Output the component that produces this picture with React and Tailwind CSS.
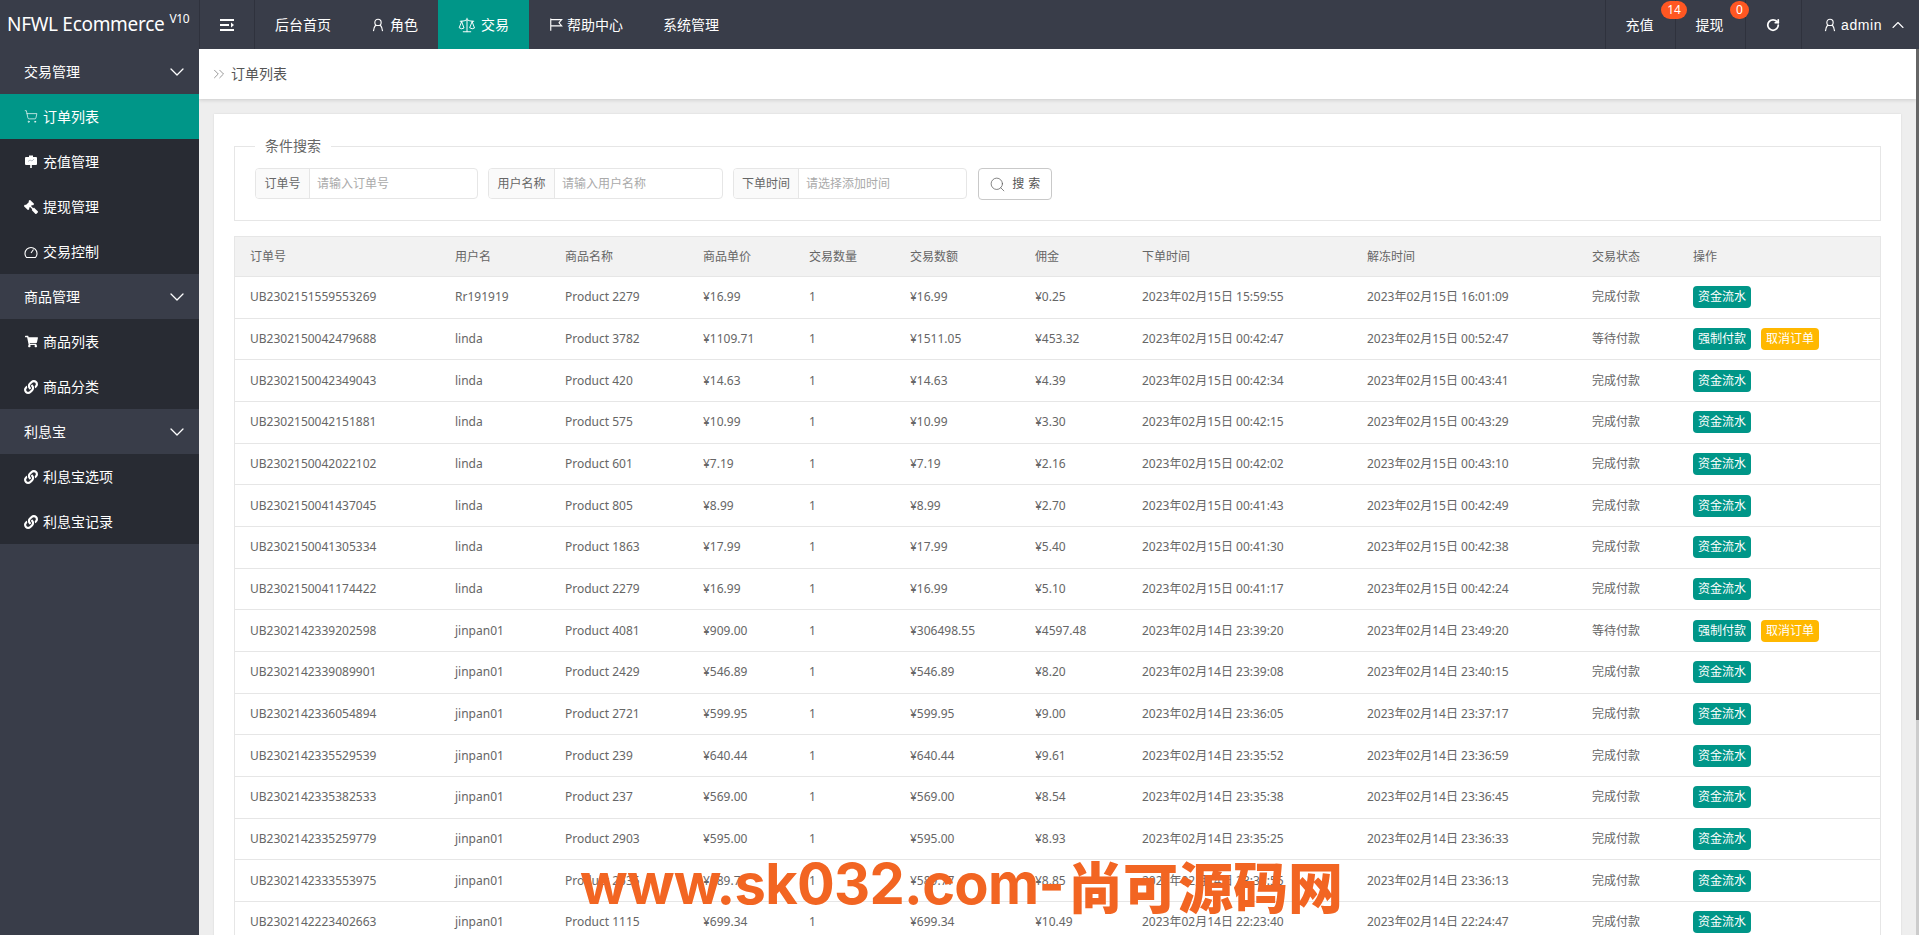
import React from "react";
import { ChevronDown, ChevronUp, ChevronsRight, Search, RotateCw, ShoppingCart, Scale } from "lucide-react";
import { FaGavel, FaLink, FaShoppingCart } from "react-icons/fa";

const UserIcon = ({ s = 14 }) => (
  <svg width={s} height={s} viewBox="0 0 16 16" fill="none" stroke="currentColor" strokeWidth="1.3">
    <circle cx="8" cy="5" r="3.6" />
    <path d="M5.4 8C4 9.5 3.2 12 2.8 15M10.6 8c1.4 1.500 2.200 4 2.600 7" />
  </svg>
);
const FlagIcon = () => (
  <svg width="14" height="15" viewBox="0 0 16 16" fill="none" stroke="currentColor" strokeWidth="1.3">
    <path d="M2 1v14M2 2.500h12.500l-3 3.500 3 3.500H2" />
  </svg>
);
const ShrinkIcon = () => (
  <svg width="14" height="12" viewBox="0 0 14 12" fill="currentColor">
    <rect x="0" y="0" width="14" height="2" />
    <rect x="0" y="5" width="9" height="2" />
    <path d="M11 3.500L14 6l-3 2.500z" />
    <rect x="0" y="10" width="14" height="2" />
  </svg>
);
const BoardIcon = () => (
  <svg width="14" height="14" viewBox="0 0 14 14" fill="currentColor">
    <rect x="1" y="2" width="12" height="8" rx="1" />
    <rect x="5" y="0.500" width="4" height="2" />
    <rect x="6.200" y="10" width="1.600" height="3" />
    <path d="M4 6.500l2-1.500 2 1 2-2" fill="none" stroke="#9aa0ac" strokeWidth="0.700" />
  </svg>
);
const GaugeIcon = () => (
  <svg width="14" height="14" viewBox="0 0 14 14" fill="none" stroke="currentColor" strokeWidth="1.100">
    <path d="M2.500 12.500A6 6 0 1 1 11.500 12.500Z" />
    <path d="M7 8l2.500-3.500" />
  </svg>
);

const Sep = "border-l border-[#2f323d]";
const TopItem = ({ children, active, gap = "gap-[5px]" }) => (
  <div className={`flex h-full items-center ${gap} px-5 ${active ? "bg-[#009688]" : ""}`}>{children}</div>
);
const Group = ({ children }) => (
  <div className="flex h-[45px] items-center justify-between bg-[#393D49] pl-6 pr-[10px] text-sm text-white">
    <span>{children}</span>
    <ChevronDown size={24} strokeWidth={1.3} />
  </div>
);
const Item = ({ icon, children, active }) => (
  <div className={`flex h-[45px] items-center gap-[5px] pl-6 text-sm text-white ${active ? "bg-[#009688]" : "bg-[#282B33]"}`}>
    <span className="flex w-[14px] justify-center">{icon}</span>
    <span>{children}</span>
  </div>
);
const Field = ({ label, ph, w, lw }) => (
  <div className={`flex h-[31px] ${w} overflow-hidden rounded-sm border border-[#e6e6e6]`}>
    <span className={`flex ${lw} shrink-0 items-center justify-center border-r border-[#e6e6e6] bg-[#fafafa] text-xs text-[#666]`}>{label}</span>
    <input placeholder={ph} className="min-w-0 flex-1 pl-[7px] text-xs outline-none placeholder:text-[#aaaaaa]" />
  </div>
);

const cols = "grid grid-cols-[205px_110px_138px_106px_101px_125px_107px_225px_225px_101px_1fr] items-center";
const D15 = "2023年02月15日 ";
const D14 = "2023年02月14日 ";
const rows = [
  ["UB2302151559553269", "Rr191919", "Product 2279", "¥16.99", "¥16.99", "¥0.25", D15 + "15:59:55", D15 + "16:01:09", 0],
  ["UB2302150042479688", "linda", "Product 3782", "¥1109.71", "¥1511.05", "¥453.32", D15 + "00:42:47", D15 + "00:52:47", 1],
  ["UB2302150042349043", "linda", "Product 420", "¥14.63", "¥14.63", "¥4.39", D15 + "00:42:34", D15 + "00:43:41", 0],
  ["UB2302150042151881", "linda", "Product 575", "¥10.99", "¥10.99", "¥3.30", D15 + "00:42:15", D15 + "00:43:29", 0],
  ["UB2302150042022102", "linda", "Product 601", "¥7.19", "¥7.19", "¥2.16", D15 + "00:42:02", D15 + "00:43:10", 0],
  ["UB2302150041437045", "linda", "Product 805", "¥8.99", "¥8.99", "¥2.70", D15 + "00:41:43", D15 + "00:42:49", 0],
  ["UB2302150041305334", "linda", "Product 1863", "¥17.99", "¥17.99", "¥5.40", D15 + "00:41:30", D15 + "00:42:38", 0],
  ["UB2302150041174422", "linda", "Product 2279", "¥16.99", "¥16.99", "¥5.10", D15 + "00:41:17", D15 + "00:42:24", 0],
  ["UB2302142339202598", "jinpan01", "Product 4081", "¥909.00", "¥306498.55", "¥4597.48", D14 + "23:39:20", D14 + "23:49:20", 1],
  ["UB2302142339089901", "jinpan01", "Product 2429", "¥546.89", "¥546.89", "¥8.20", D14 + "23:39:08", D14 + "23:40:15", 0],
  ["UB2302142336054894", "jinpan01", "Product 2721", "¥599.95", "¥599.95", "¥9.00", D14 + "23:36:05", D14 + "23:37:17", 0],
  ["UB2302142335529539", "jinpan01", "Product 239", "¥640.44", "¥640.44", "¥9.61", D14 + "23:35:52", D14 + "23:36:59", 0],
  ["UB2302142335382533", "jinpan01", "Product 237", "¥569.00", "¥569.00", "¥8.54", D14 + "23:35:38", D14 + "23:36:45", 0],
  ["UB2302142335259779", "jinpan01", "Product 2903", "¥595.00", "¥595.00", "¥8.93", D14 + "23:35:25", D14 + "23:36:33", 0],
  ["UB2302142333553975", "jinpan01", "Product 2535", "¥589.77", "¥589.77", "¥8.85", D14 + "23:33:55", D14 + "23:36:13", 0],
  ["UB2302142223402663", "jinpan01", "Product 1115", "¥699.34", "¥699.34", "¥10.49", D14 + "22:23:40", D14 + "22:24:47", 0],
];
const heads = ["订单号", "用户名", "商品名称", "商品单价", "交易数量", "交易数额", "佣金", "下单时间", "解冻时间", "交易状态", "操作"];
const Btn = ({ children, y }) => (
  <span className={`flex h-[22px] w-[58px] items-center justify-center rounded-sm text-xs text-white ${y ? "bg-[#FFB800]" : "bg-[#009688]"}`}>{children}</span>
);

export default function App() {
  return (
    <div className="relative flex h-screen flex-col overflow-hidden bg-[#eeeeee] font-['Noto_Sans','Noto_Sans_CJK_SC',sans-serif] text-[#666]">
      <header className="flex h-[49px] shrink-0 items-center bg-[#393D49] text-sm text-white">
        <div className="flex h-full w-[199px] items-center whitespace-nowrap pl-[7px] text-[19px] tracking-[-0.3px]">
          <span>NFWL Ecommerce</span>
          <span className="ml-[5px] -translate-y-[6px] text-xs">V10</span>
        </div>
        <div className="flex h-full w-[56px] items-center justify-center border-x border-[#2f323d]"><ShrinkIcon /></div>
        <TopItem>后台首页</TopItem>
        <TopItem><UserIcon />角色</TopItem>
        <TopItem active><Scale size={18} strokeWidth={1.3} />交易</TopItem>
        <TopItem gap="gap-[4px]"><FlagIcon />帮助中心</TopItem>
        <TopItem>系统管理</TopItem>
        <div className="flex-1" />
        <div className={`relative flex h-full w-[70px] items-center justify-center pr-[2px] ${Sep}`}>
          充值
          <span className="absolute left-[55px] top-[1px] z-10 flex h-[18px] w-[26px] items-center justify-center rounded-full bg-[#FF5722] text-xs">14</span>
        </div>
        <div className={`relative flex h-full w-[70px] items-center justify-center pr-[2px] ${Sep}`}>
          提现
          <span className="absolute left-[54px] top-[1px] z-10 flex h-[18px] w-[19px] items-center justify-center rounded-full bg-[#FF5722] text-xs">0</span>
        </div>
        <div className={`flex h-full w-[56px] items-center justify-center pr-[2px] ${Sep}`}><RotateCw size={14} strokeWidth={3} /></div>
        <div className={`flex h-full w-[118px] items-center gap-[4px] pl-[21px] font-['Liberation_Sans',sans-serif] ${Sep}`}>
          <UserIcon />
          <span className="tracking-[0.6px]">admin</span>
          <ChevronUp size={20} strokeWidth={1.3} className="ml-[2px]" />
        </div>
      </header>
      <div className="flex min-h-0 flex-1">
        <aside className="w-[199px] shrink-0 bg-[#393D49]">
          <Group>交易管理</Group>
          <Item active icon={<ShoppingCart size={17} strokeWidth={1.2} />}>订单列表</Item>
          <Item icon={<BoardIcon />}>充值管理</Item>
          <Item icon={<FaGavel size={14} className="-scale-x-100" />}>提现管理</Item>
          <Item icon={<GaugeIcon />}>交易控制</Item>
          <Group>商品管理</Group>
          <Item icon={<FaShoppingCart size={13} />}>商品列表</Item>
          <Item icon={<FaLink size={14} />}>商品分类</Item>
          <Group>利息宝</Group>
          <Item icon={<FaLink size={14} />}>利息宝选项</Item>
          <Item icon={<FaLink size={14} />}>利息宝记录</Item>
        </aside>
        <main className="flex min-w-0 flex-1 flex-col overflow-hidden">
          <div className="flex h-[50px] shrink-0 items-center gap-[3px] bg-white pl-[11px] text-sm shadow-[0_1px_4px_rgba(0,0,0,0.15)]">
            <ChevronsRight size={18} strokeWidth={1} className="text-[#777]" />
            <span className="text-[#555]">订单列表</span>
          </div>
          <div className="mx-[15px] mt-[15px] flex-1 bg-white px-5 pt-[21px] shadow-[0_0_2px_rgba(0,0,0,0.1)]">
            <fieldset className="h-[86px] border border-[#e6e6e6] px-5 pb-5">
              <legend className="px-[10px] text-sm leading-[22px] text-[#666]">条件搜索</legend>
              <div className="mt-[11px] flex items-start gap-[10px]">
                <Field label="订单号" ph="请输入订单号" w="w-[223px]" lw="w-[54px]" />
                <Field label="用户名称" ph="请输入用户名称" w="w-[235px]" lw="w-[66px]" />
                <Field label="下单时间" ph="请选择添加时间" w="w-[234px]" lw="w-[65px]" />
                <button className="ml-px flex h-[32px] w-[74px] items-center justify-center gap-[6px] rounded-sm border border-[#c9c9c9] text-xs tracking-[0.5px] text-[#555]">
                  <Search size={17} strokeWidth={1} />搜 索
                </button>
              </div>
            </fieldset>
            <div className="mt-[15px] border-x border-t border-[#e6e6e6] text-xs">
              <div className={`${cols} h-[40px] border-b border-[#e6e6e6] bg-[#f2f2f2] pl-[15px]`}>
                {heads.map((h) => <div key={h}>{h}</div>)}
              </div>
              {rows.map((r) => (
                <div key={r[0]} className={`${cols} h-[41.67px] border-b border-[#e6e6e6] pl-[15px]`}>
                  <div>{r[0]}</div><div>{r[1]}</div><div>{r[2]}</div><div>{r[3]}</div><div>1</div>
                  <div>{r[4]}</div><div>{r[5]}</div><div>{r[6]}</div><div>{r[7]}</div>
                  <div>{r[8] ? "等待付款" : "完成付款"}</div>
                  <div className="flex gap-[10px]">
                    {r[8] ? (<><Btn>强制付款</Btn><Btn y>取消订单</Btn></>) : <Btn>资金流水</Btn>}
                  </div>
                </div>
              ))}
            </div>
          </div>
        </main>
        <div className="w-[3px] shrink-0 bg-[#cccccc]"><div className="h-[671px] bg-[#666666]" /></div>
      </div>
      <div className="pointer-events-none absolute left-[580px] top-[849px] flex items-center whitespace-nowrap text-[#F26522]">
        <span className="font-['Inter',sans-serif] text-[56px] font-bold leading-[70px] tracking-[-0.7px]">www.sk032.com-</span>
        <span className="ml-[4px] font-['Noto_Sans_CJK_SC',sans-serif] text-[55px] font-black leading-[70px]">尚可源码网</span>
      </div>
    </div>
  );
}
